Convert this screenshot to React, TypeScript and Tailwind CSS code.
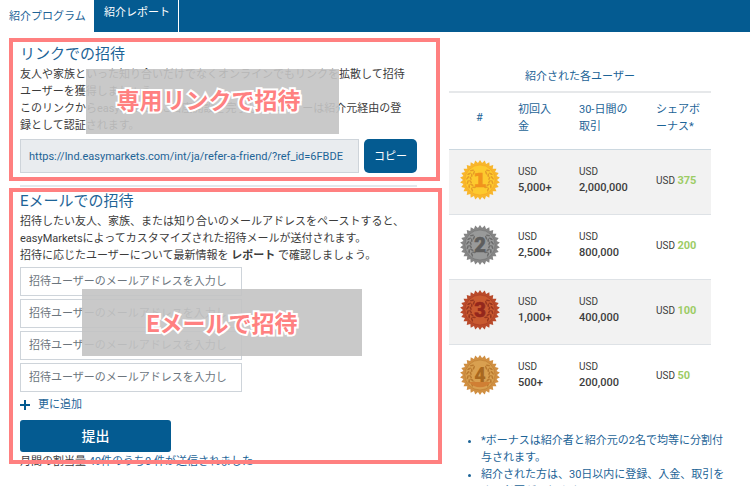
import React from "react";

type Medal = { rim: string; face: string; ink: string; leaf: string };
type Tier = { rank: number; deposit: string; volume: string; bonus: number; medal: Medal };

const tiers: Tier[] = [
  { rank: 1, deposit: "5,000+", volume: "2,000,000", bonus: 375, medal: { rim: "#f8b62c", face: "#fdca2e", ink: "#f1931c", leaf: "#e59c28" } },
  { rank: 2, deposit: "2,500+", volume: "800,000", bonus: 200, medal: { rim: "#858585", face: "#999a9a", ink: "#5d5d5d", leaf: "#6c6c6c" } },
  { rank: 3, deposit: "1,000+", volume: "400,000", bonus: 100, medal: { rim: "#b94a2a", face: "#c95a30", ink: "#94271c", leaf: "#97351f" } },
  { rank: 4, deposit: "500+", volume: "200,000", bonus: 50, medal: { rim: "#d08f42", face: "#d9a050", ink: "#a9681f", leaf: "#b9792f" } },
];

const teeth = Array.from({ length: 52 }, (_, i) => {
  const r = i % 2 === 0 ? 20 : 17;
  const a = (i * Math.PI) / 26;
  return `${(20 + r * Math.sin(a)).toFixed(2)},${(20 - r * Math.cos(a)).toFixed(2)}`;
}).join(" ");

const leaves = [-50, -30, -10, 10, 30, 50];

function MedalIcon({ rank, medal }: { rank: number; medal: Medal }) {
  return (
    <svg viewBox="0 0 40 40" className="mx-auto block size-10" role="img" aria-label={`${rank}`}>
      <polygon points={teeth} fill={medal.rim} />
      <circle cx="20" cy="20" r="15" fill={medal.face} stroke={medal.ink} strokeOpacity="0.5" strokeWidth="0.7" />
      {leaves.map((a) => (
        <g key={a} fill={medal.leaf}>
          <g transform={`rotate(${a} 20 20)`}>
            <ellipse cx="32.5" cy="20" rx="0.8" ry="2.2" transform="rotate(-30 32.5 20)" />
            <ellipse cx="29.5" cy="20" rx="0.8" ry="2" transform="rotate(30 29.5 20)" />
          </g>
          <g transform={`rotate(${a} 20 20)`}>
            <ellipse cx="7.5" cy="20" rx="0.8" ry="2.2" transform="rotate(30 7.5 20)" />
            <ellipse cx="10.5" cy="20" rx="0.8" ry="2" transform="rotate(-30 10.5 20)" />
          </g>
        </g>
      ))}
      {rank === 4 && <path d="M9 27a14 14 0 0 0 22 0z" fill="#d07f34" />}
      <text
        x="20"
        y="27"
        textAnchor="middle"
        fontSize="20"
        fill={medal.ink}
        stroke={medal.ink}
        strokeWidth={rank === 4 ? 0 : 0.6}
        className={rank === 1 ? "font-['DejaVu_Sans',sans-serif] font-bold" : "font-[Roboto,sans-serif] font-black"}
      >
        {rank}
      </text>
    </svg>
  );
}

function Callout({ frame, patch, text }: { frame: string; patch: string; text: string }) {
  return (
    <>
      <div className={`pointer-events-none absolute flex items-center justify-center bg-[#c3c3c3]/90 ${patch}`}>
        <span className="whitespace-nowrap text-[23px] leading-8 font-bold text-[#ff8080] [paint-order:stroke_fill] [-webkit-text-stroke:4px_white]">{text}</span>
      </div>
      <div className={`pointer-events-none absolute border-4 border-[#ff8080] ${frame}`} />
    </>
  );
}

const emails = [1, 2, 3, 4];

export default function App() {
  return (
    <div className="h-screen overflow-hidden bg-white font-[Roboto,'Noto_Sans_CJK_JP',sans-serif] text-[11px] leading-[17px] text-[#3c3c3c]">
      <nav className="flex h-8 bg-[#045b91]">
        <a href="#program" className="w-[94px] bg-white pt-2 pl-[9px] text-[#1d6497]">紹介プログラム</a>
        <a href="#report" className="w-[85px] border-r border-white pt-1 pl-[10px] text-white">紹介レポート</a>
      </nav>

      <div className="flex gap-8 pr-4 pl-5">
        <main className="min-w-0 flex-[397]">
          <section className="relative border-b-2 border-[#e3e7eb] pt-3 pb-3">
            <h2 className="pb-[2px] text-[15px] leading-[20px] text-[#1d6497]">リンクでの招待</h2>
            <p>
              友人や家族といった知り合いだけでなくオンラインでもリンクを拡散して招待
              <br />
              ユーザーを獲得しましょう。
              <br />
              このリンクからeasyMarketsに口座開設を完了したユーザーは紹介元経由の登
              <br />
              録として認証されます。
            </p>
            <div className="mt-[5px] flex gap-[5px]">
              <input
                readOnly
                aria-label="紹介リンク"
                value="https://lnd.easymarkets.com/int/ja/refer-a-friend/?ref_id=6FBDE"
                className="h-[34px] min-w-0 flex-1 border border-[#ced4da] bg-[#e9ecef] px-2 text-[#1d6497]"
              />
              <button className="h-[34px] w-[53px] rounded-[5px] bg-[#045b91] text-[11px] text-white">コピー</button>
            </div>
            <Callout frame="top-[6px] -right-[23px] -left-[11px] h-[143px]" patch="top-[37px] left-[66px] h-[65px] w-[253px] pr-2" text="専用リンクで招待" />
          </section>

          <section className="relative pt-1">
            <h2 className="pb-[2px] text-[15px] leading-[20px] text-[#1d6497]">Eメールでの招待</h2>
            <p>
              招待したい友人、家族、または知り合いのメールアドレスをペーストすると、
              <br />
              easyMarketsによってカスタマイズされた招待メールが送付されます。
              <br />
              招待に応じたユーザーについて最新情報を <b>レポート</b> で確認しましょう。
            </p>
            <div className="mt-[3px] flex w-[222px] flex-col gap-[3px]">
              {emails.map((n) => (
                <input
                  key={n}
                  type="email"
                  aria-label={`メールアドレス ${n}`}
                  placeholder="招待ユーザーのメールアドレスを入力し"
                  className="h-[29px] border border-[#ced4da] px-2 placeholder:text-[#6c757d]"
                />
              ))}
            </div>
            <button className="mt-1 flex items-center gap-2 text-[#1d6497]">
              <svg viewBox="0 0 10 10" className="size-[10px]" aria-hidden="true">
                <path d="M5 0v10M0 5h10" stroke="#045b91" strokeWidth="2" />
              </svg>
              更に追加
            </button>
            <button className="mt-[7px] block h-8 w-[151px] rounded-[3px] bg-[#045b91] text-[14px] font-medium text-white">提出</button>
            <p className="pt-px">
              月間の割当量 <span className="text-[#1d6497]">49件のうち0 件が送信されました</span>
            </p>
            <Callout frame="top-[1px] -right-[25px] -left-[11px] h-[276px]" patch="top-[102px] left-[62px] h-[67px] w-[280px] pt-1" text="Eメールで招待" />
          </section>
        </main>

        <aside className="min-w-0 flex-[285] pt-9 text-[#1d6497]">
          <table className="w-full max-w-[262px] table-fixed border-collapse text-left">
            <caption className="pb-[6px] leading-[17px]">紹介された各ユーザー</caption>
            <colgroup>
              <col className="w-[61px]" />
              <col className="w-[61px]" />
              <col className="w-[77px]" />
              <col />
            </colgroup>
            <thead>
              <tr className="h-[57px] border-t-2 border-b border-t-[#e6e8ea] border-b-[#ccd8e0] [&>th]:pb-[6px] [&>th]:font-normal">
                <th className="text-center">#</th>
                <th className="pr-4 pl-2">初回入<br />金</th>
                <th className="pl-2">30-日間の<br />取引</th>
                <th className="pl-2">シェアボ<br />ーナス*</th>
              </tr>
            </thead>
            <tbody className="text-[10px] leading-4 text-[#3c3c3c]">
              {tiers.map((t) => (
                <tr key={t.rank} className="h-[65px] border-b border-[#dee2e6] last:border-0 odd:bg-[#f2f2f2]">
                  <td className="pb-1"><MedalIcon rank={t.rank} medal={t.medal} /></td>
                  <td className="pb-1 pl-2">USD<br /><b className="text-[11px] font-medium">{t.deposit}</b></td>
                  <td className="pb-1 pl-2">USD<br /><b className="text-[11px] font-medium">{t.volume}</b></td>
                  <td className="pb-[2px] pl-2">USD <b className="text-[11px] text-[#9ccc65]">{t.bonus}</b></td>
                </tr>
              ))}
            </tbody>
          </table>
          <ul className="mt-[23px] list-disc pl-8">
            <li>*ボーナスは紹介者と紹介元の2名で均等に分割付<br />与されます。</li>
            <li>紹介された方は、30日以内に登録、入金、取引を<br />する必要があります。</li>
          </ul>
        </aside>
      </div>
    </div>
  );
}
